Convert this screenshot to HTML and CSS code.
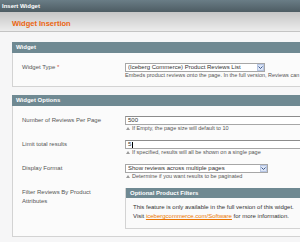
FILE: index.html
```html
<!DOCTYPE html>
<html lang="en">
<head>
  <meta charset="UTF-8" />
  <title>Insert Widget</title>
  <link rel="stylesheet" href="styles.css">
</head>
<body>
  <div class="titlebar">Insert Widget</div>
  <div class="content-header"><h3>Widget Insertion</h3></div>

  <div class="main">
    <div class="section">
      <div class="section-head">Widget</div>
      <div class="fieldset">
        <div class="row">
          <div class="label">Widget Type <em>*</em></div>
          <div class="value">
            <div class="select select-type">
              <span class="select-text">(Iceberg Commerce) Product Reviews List</span>
              <span class="arrow"><svg width="5" height="3" viewBox="0 0 5 3"><path d="M0.5 0.5 L2.5 2.5 L4.5 0.5" fill="none" stroke="#3f5a8c" stroke-width="1"/></svg></span>
            </div>
            <p class="note">Embeds product reviews onto the page. In the full version, Reviews can</p>
          </div>
        </div>
      </div>
    </div>

    <div class="section">
      <div class="section-head">Widget Options</div>
      <div class="fieldset">
        <div class="row">
          <div class="label">Number of Reviews Per Page</div>
          <div class="value">
            <div class="input">500</div>
            <p class="note arrow-note">If Empty, the page size will default to 10</p>
          </div>
        </div>
        <div class="row">
          <div class="label">Limit total results</div>
          <div class="value">
            <div class="input">5<span class="caret"></span></div>
            <p class="note arrow-note">If specified, results will all be shown on a single page</p>
          </div>
        </div>
        <div class="row">
          <div class="label">Display Format</div>
          <div class="value">
            <div class="select select-format">
              <span class="select-text">Show reviews across multiple pages</span>
              <span class="arrow"><svg width="5" height="3" viewBox="0 0 5 3"><path d="M0.5 0.5 L2.5 2.5 L4.5 0.5" fill="none" stroke="#3f5a8c" stroke-width="1"/></svg></span>
            </div>
            <p class="note arrow-note">Determine if you want results to be paginated</p>
          </div>
        </div>
        <div class="row">
          <div class="label">Filter Reviews By Product Attributes</div>
          <div class="value">
            <div class="filters">
              <div class="filters-head">Optional Product Filters</div>
              <div class="filters-body">
                This feature is only available in the full version of this widget.<br>
                Visit <a href="#">icebergcommerce.com/Software</a> for more information.
              </div>
            </div>
          </div>
        </div>
      </div>
    </div>
  </div>
</body>
</html>
```

FILE: styles.css
```css
* { box-sizing: border-box; }
body { margin: 0; width: 300px; height: 242px; overflow: hidden; font-family: "Liberation Sans", Arial, sans-serif; font-size: 6px; color: #444; background: #f6f6f7; }

.titlebar { height: 12px; line-height: 12px; padding-left: 2px; background: linear-gradient(#6a7d86, #4d5c63); color: #fff; font-weight: bold; }
.content-header { height: 20px; background: linear-gradient(#c6c6c6, #ececec); border-bottom: 1px solid #c4c4c4; }
.content-header h3 { margin: 0; padding: 7px 0 0 12px; font-size: 7.5px; line-height: 10px; color: #eb6410; }

.main { width: 340px; padding: 10px 0 0 12px; }
.section-head { height: 11px; line-height: 11px; padding-left: 4px; background: #6f8992; color: #fff; font-weight: bold; }
.fieldset { border: 1px solid #d3d3d3; border-top: 0; background: #fbfbfb; padding: 10px 0 7px 9px; margin-bottom: 8px; }

.row { display: grid; grid-template-columns: 92px 1fr; column-gap: 11px; margin-bottom: 8px; }
.row:last-child { margin-bottom: 0; }
.label { line-height: 9px; color: #555; }
.label em { font-style: normal; color: #d9553a; }

.select { display: flex; align-items: center; height: 9px; border: 1px solid #a7a7a7; background: #fff; padding-left: 2px; line-height: 7px; color: #333; }
.select-type { width: 140px; }
.select-format { width: 143px; }
.select-text { flex: 1; white-space: nowrap; overflow: hidden; }
.arrow { display: flex; align-items: center; justify-content: center; width: 7px; height: 7px; background: #dce5f6; border: 1px solid #b7c6e4; }

.input { display: flex; align-items: center; width: 200px; height: 9px; border: 1px solid #a7a7a7; border-top-color: #8c8c8c; background: #fff; padding-left: 2px; line-height: 7px; color: #333; }
.caret { display: inline-block; width: 1px; height: 6px; background: #000; margin-left: 1px; }

.note { margin: 0; font-size: 5.5px; line-height: 7px; color: #555; white-space: nowrap; }
.arrow-note::before { content: ""; display: inline-block; width: 0; height: 0; border-left: 2px solid transparent; border-right: 2px solid transparent; border-bottom: 3px solid #9a9a9a; margin: 0 2px 1px 1px; vertical-align: middle; }

.filters { width: 200px; border: 1px solid #d3d3d3; border-top: 0; }
.filters-head { height: 10px; line-height: 10px; padding-left: 4px; background: #6f8992; color: #fff; font-weight: bold; }
.filters-body { background: #fafafa; padding: 5px 0 7px 7px; line-height: 9px; color: #333; white-space: nowrap; }
.filters-body a { color: #ea7601; }
```
